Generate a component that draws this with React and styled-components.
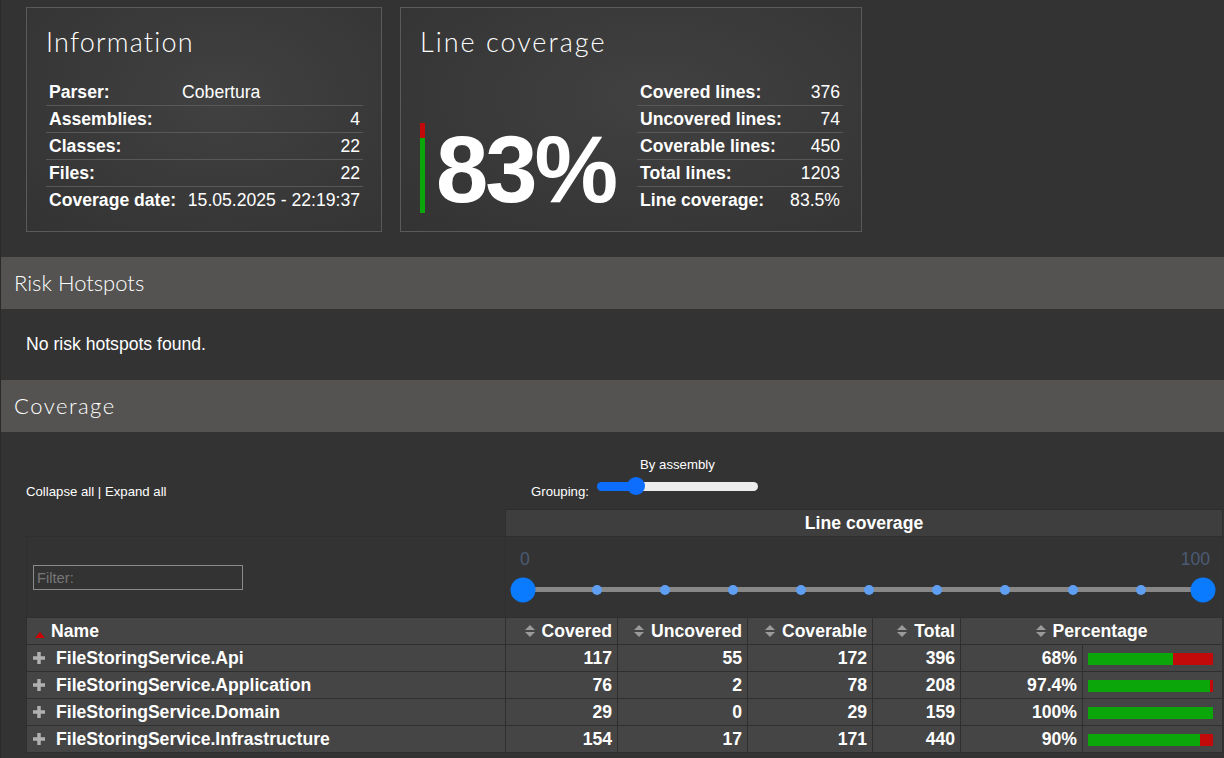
import React from "react";
import styled, { createGlobalStyle } from "styled-components";

const GlobalStyle = createGlobalStyle`
  html, body {
    margin: 0;
    padding: 0;
    background: #333;
  }
  body {
    font-family: "Liberation Sans", Arial, sans-serif;
    font-size: 17.6px;
    color: #fff;
    overflow: hidden;
  }
`;

const Page = styled.div`
  border-left: 1px solid #2a2a2a;
  min-height: 100vh;
  box-sizing: border-box;
`;

const CardRow = styled.div`
  display: flex;
  gap: 18px;
  padding: 7px 0 0 25px;
`;

const Card = styled.div`
  width: ${(p) => p.$width}px;
  box-sizing: border-box;
  border: 1px solid #5a5a5a;
  padding: 18px 18px 18px 19px;
  background: radial-gradient(ellipse at 55% 40%, #414141 0%, #393939 55%, #333 100%);
  display: flex;
  flex-direction: column;
`;

const CardTitle = styled.h2`
  margin: 0 0 21px;
  font-family: Lato, "Open Sans", sans-serif;
  font-weight: 300;
  font-size: 27px;
  line-height: 32px;
  letter-spacing: ${(p) => p.$spacing || 1.2}px;
`;

const InfoTable = styled.table`
  width: ${(p) => p.$width || "100%"};
  margin-left: auto;
  border-collapse: collapse;

  th,
  td {
    padding: 0 3px;
    line-height: 26px;
    font-size: 17.6px;
    white-space: nowrap;
  }
  th {
    text-align: left;
    font-weight: bold;
    width: 1%;
  }
  tr + tr {
    border-top: 1px solid #585858;
  }
`;

const Value = styled.td`
  text-align: ${(p) => (p.$left ? "left" : "right")};
`;

const CoverageBody = styled.div`
  display: flex;
  align-items: flex-end;
`;

const BarBig = styled.div`
  width: 5px;
  height: 90px;
  background: linear-gradient(
    to bottom,
    #c20a0a ${(p) => 100 - p.$pct}%,
    #0aa60a ${(p) => 100 - p.$pct}%
  );
`;

const BigNumber = styled.div`
  margin-left: 11px;
  font-size: 94px;
  font-weight: bold;
  line-height: 86px;
  letter-spacing: -3px;
`;

const SectionTitle = styled.h1`
  margin: ${(p) => (p.$first ? "25px" : "0")} 0 0;
  height: 52px;
  padding: 0 13px;
  background: #545351;
  font-family: Lato, "Open Sans", sans-serif;
  font-weight: 300;
  font-size: 22px;
  line-height: 52px;
  letter-spacing: ${(p) => p.$spacing || 0}px;
`;

const Message = styled.p`
  margin: 0;
  padding: 26px 25px 27px;
  line-height: 18px;
  font-size: 17.6px;
`;

const Toolbar = styled.div`
  display: flex;
  align-items: flex-end;
  padding: 25px 0 0 25px;
  font-size: 13.2px;
  line-height: 15px;
`;

const Links = styled.div`
  width: 505px;
  flex: none;
`;

const Grouping = styled.div`
  display: flex;
  align-items: flex-end;
`;

const GroupingControl = styled.div`
  display: flex;
  flex-direction: column;
  align-items: center;
  margin-left: 8px;
`;

const GroupingLabel = styled.div`
  margin-bottom: 5px;
`;

const GroupSlider = styled.div`
  position: relative;
  width: 161px;
  height: 18px;
  margin-bottom: 4px;
`;

const GroupTrack = styled.div`
  position: absolute;
  left: 0;
  right: 0;
  top: 5px;
  height: 9px;
  border-radius: 5px;
  background: linear-gradient(to right, #0d6efd 39px, #ececec 39px);
`;

const GroupThumb = styled.div`
  position: absolute;
  top: 0;
  left: 30px;
  width: 18px;
  height: 18px;
  border-radius: 50%;
  background: #0d6efd;
`;

const Table = styled.table`
  margin: 10px 0 0 25px;
  width: 1196px;
  table-layout: fixed;
  border-collapse: collapse;

  th,
  td {
    border: 1px solid #2f2f2f;
    padding: 0 5px;
    line-height: 26px;
    font-size: 17.6px;
    font-weight: bold;
    white-space: nowrap;
    overflow: hidden;
  }
`;

const Blank = styled.th`
  && {
    border: none;
    background: transparent;
  }
`;

const GroupHead = styled.th`
  background: #3e3e3e;
  text-align: center;
`;

const FilterCell = styled.td`
  && {
    padding: 0 0 0 6px;
    vertical-align: middle;
    background: #333;
  }
`;

const FilterInput = styled.input`
  box-sizing: border-box;
  width: 210px;
  height: 25px;
  border: 1px solid #8a8a8a;
  background: #333;
  color: #ddd;
  padding: 0 3px;
  font-family: "Liberation Sans", Arial, sans-serif;
  font-size: 14.7px;
  outline: none;

  &::placeholder {
    color: #777;
  }
`;

const RangeCell = styled.td`
  && {
    padding: 0 19px 0 17px;
    background: #333;
    vertical-align: top;
  }
`;

const Range = styled.div`
  height: 80px;
`;

const RangeLabels = styled.div`
  display: flex;
  justify-content: space-between;
  margin: 0 -7px 0 -3px;
  padding-top: 13px;
  line-height: 18px;
  font-size: 17.6px;
  font-weight: normal;
  color: #4b5b76;
`;

const RangeTrack = styled.div`
  position: relative;
  height: 5px;
  margin-top: 19px;
  background: #888;
`;

const Stop = styled.span`
  position: absolute;
  top: 50%;
  left: calc(${(p) => p.$at}% + ${(p) => (p.$big ? 0 : 6)}px);
  width: ${(p) => (p.$big ? 25 : 10)}px;
  height: ${(p) => (p.$big ? 25 : 10)}px;
  border-radius: 50%;
  background: ${(p) => (p.$big ? "#0a7bff" : "#5e9ff2")};
  transform: translate(-50%, -50%);
`;

const HeadCell = styled.th`
  background: #454545;
  text-align: ${(p) => p.$align || "right"};
  && {
    padding-left: ${(p) => p.$pl || 5}px;
  }
`;

const Cell = styled.td`
  background: #454545;
  text-align: ${(p) => p.$align || "right"};
  && {
    padding-left: ${(p) => p.$pl || 5}px;
  }
`;

const Icon = styled.svg`
  display: inline-block;
  vertical-align: middle;
  margin-right: ${(p) => p.$gap}px;
  position: relative;
  top: ${(p) => p.$top ?? -1}px;
`;

const PctBar = styled.div`
  width: 125px;
  height: 12px;
  vertical-align: middle;
  display: inline-block;
  background: linear-gradient(
    to right,
    #0aa60a ${(p) => p.$pct}%,
    #c20a0a ${(p) => p.$pct}%
  );
`;

const SortIcon = () => (
  <Icon width="10" height="12" viewBox="0 0 10 12" $gap={7}>
    <polygon points="0,5 5,0 10,5" fill="#9a9a9a" />
    <polygon points="0,7 10,7 5,12" fill="#9a9a9a" />
  </Icon>
);

const SortedIcon = () => (
  <Icon width="10" height="6" viewBox="0 0 10 6" $gap={6} $top={3}>
    <polygon points="0,6 5,0 10,6" fill="#c00" />
  </Icon>
);

const PlusIcon = () => (
  <Icon width="12" height="12" viewBox="0 0 12 12" $gap={11}>
    <rect x="0" y="4.25" width="12" height="3.5" fill="#b0b0b0" />
    <rect x="4.25" y="0" width="3.5" height="12" fill="#b0b0b0" />
  </Icon>
);

const info = [
  ["Parser:", "Cobertura", true],
  ["Assemblies:", "4"],
  ["Classes:", "22"],
  ["Files:", "22"],
  ["Coverage date:", "15.05.2025 - 22:19:37"],
];

const lines = [
  ["Covered lines:", "376"],
  ["Uncovered lines:", "74"],
  ["Coverable lines:", "450"],
  ["Total lines:", "1203"],
  ["Line coverage:", "83.5%"],
];

const assemblies = [
  { name: "FileStoringService.Api", covered: 117, uncovered: 55, coverable: 172, total: 396, pct: "68%", bar: 68 },
  { name: "FileStoringService.Application", covered: 76, uncovered: 2, coverable: 78, total: 208, pct: "97.4%", bar: 97.4 },
  { name: "FileStoringService.Domain", covered: 29, uncovered: 0, coverable: 29, total: 159, pct: "100%", bar: 100 },
  { name: "FileStoringService.Infrastructure", covered: 154, uncovered: 17, coverable: 171, total: 440, pct: "90%", bar: 90 },
];

const stops = [10, 20, 30, 40, 50, 60, 70, 80, 90];

export default function App() {
  return (
    <Page>
      <GlobalStyle />
      <CardRow>
        <Card $width={356}>
          <CardTitle>Information</CardTitle>
          <InfoTable>
            <tbody>
              {info.map(([label, value, left]) => (
                <tr key={label}>
                  <th>{label}</th>
                  <Value $left={left}>{value}</Value>
                </tr>
              ))}
            </tbody>
          </InfoTable>
        </Card>
        <Card $width={462}>
          <CardTitle $spacing={2}>Line coverage</CardTitle>
          <CoverageBody>
            <BarBig $pct={83.5} />
            <BigNumber>83%</BigNumber>
            <InfoTable $width="206px">
              <tbody>
                {lines.map(([label, value]) => (
                  <tr key={label}>
                    <th>{label}</th>
                    <Value>{value}</Value>
                  </tr>
                ))}
              </tbody>
            </InfoTable>
          </CoverageBody>
        </Card>
      </CardRow>

      <SectionTitle $first>Risk Hotspots</SectionTitle>
      <Message>No risk hotspots found.</Message>

      <SectionTitle $spacing={1.5}>Coverage</SectionTitle>
      <Toolbar>
        <Links>Collapse all | Expand all</Links>
        <Grouping>
          <div>Grouping:</div>
          <GroupingControl>
            <GroupingLabel>By assembly</GroupingLabel>
            <GroupSlider>
              <GroupTrack />
              <GroupThumb />
            </GroupSlider>
          </GroupingControl>
        </Grouping>
      </Toolbar>

      <Table>
        <colgroup>
          <col style={{ width: 479 }} />
          <col style={{ width: 112 }} />
          <col style={{ width: 130 }} />
          <col style={{ width: 125 }} />
          <col style={{ width: 88 }} />
          <col style={{ width: 122 }} />
          <col style={{ width: 140 }} />
        </colgroup>
        <thead>
          <tr>
            <Blank />
            <GroupHead colSpan={6}>Line coverage</GroupHead>
          </tr>
          <tr>
            <FilterCell>
              <FilterInput placeholder="Filter:" />
            </FilterCell>
            <RangeCell colSpan={6}>
              <Range>
                <RangeLabels>
                  <span>0</span>
                  <span>100</span>
                </RangeLabels>
                <RangeTrack>
                  <Stop $at={0} $big />
                  {stops.map((s) => (
                    <Stop key={s} $at={s} />
                  ))}
                  <Stop $at={100} $big />
                </RangeTrack>
              </Range>
            </RangeCell>
          </tr>
          <tr>
            <HeadCell $align="left" $pl={8}>
              <SortedIcon />
              Name
            </HeadCell>
            <HeadCell>
              <SortIcon />
              Covered
            </HeadCell>
            <HeadCell>
              <SortIcon />
              Uncovered
            </HeadCell>
            <HeadCell>
              <SortIcon />
              Coverable
            </HeadCell>
            <HeadCell>
              <SortIcon />
              Total
            </HeadCell>
            <HeadCell colSpan={2} $align="center">
              <SortIcon />
              Percentage
            </HeadCell>
          </tr>
        </thead>
        <tbody>
          {assemblies.map((a) => (
            <tr key={a.name}>
              <Cell $align="left" $pl={6}>
                <PlusIcon />
                {a.name}
              </Cell>
              <Cell>{a.covered}</Cell>
              <Cell>{a.uncovered}</Cell>
              <Cell>{a.coverable}</Cell>
              <Cell>{a.total}</Cell>
              <Cell>{a.pct}</Cell>
              <Cell $align="left">
                <PctBar $pct={a.bar} />
              </Cell>
            </tr>
          ))}
        </tbody>
      </Table>
    </Page>
  );
}
